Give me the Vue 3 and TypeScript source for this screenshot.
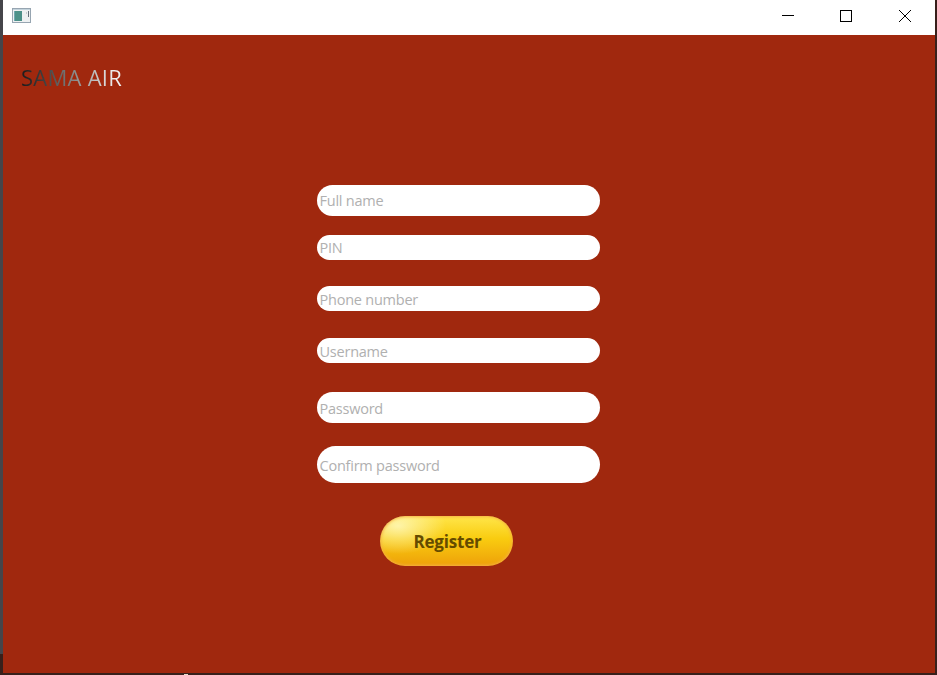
<script setup lang="ts">
import { reactive } from 'vue'

interface Field {
  key: string
  placeholder: string
  type: string
  size: string
}

const fields: Field[] = [
  { key: 'fullName', placeholder: 'Full name', type: 'text', size: 'medium' },
  { key: 'pin', placeholder: 'PIN', type: 'text', size: 'small' },
  { key: 'phone', placeholder: 'Phone number', type: 'text', size: 'small phone' },
  { key: 'username', placeholder: 'Username', type: 'text', size: 'small username' },
  { key: 'password', placeholder: 'Password', type: 'password', size: 'medium password' },
  { key: 'confirm', placeholder: 'Confirm password', type: 'password', size: 'large' },
]

const values = reactive<Record<string, string>>({})
</script>

<template>
  <div class="desktop">
    <div class="window">
      <header class="titlebar">
        <svg class="app-icon" width="20" height="16" viewBox="0 0 20 16">
          <rect x="0.5" y="0.5" width="18" height="14" fill="#eef1f2" stroke="#97a5b1" />
          <path d="M1 1.5H18" stroke="#c3d3dc" />
          <rect x="2" y="3" width="8" height="10" fill="#4c9189" />
          <path d="M2.5 3V13" stroke="#70a8b0" />
          <path d="M16.5 3V9" stroke="#65717b" />
          <path d="M14.5 4V6" stroke="#c5cbd0" />
        </svg>
        <div class="controls">
          <svg width="12" height="12" viewBox="0 0 12 12"><path d="M0 5.5H12" /></svg>
          <svg width="12" height="12" viewBox="0 0 12 12"><rect x="0.5" y="0.5" width="11" height="11" /></svg>
          <svg width="12" height="12" viewBox="0 0 12 12"><path d="M0 0L12 12M12 0L0 12" /></svg>
        </div>
      </header>
      <main class="content">
        <h1 class="brand">SAMA AIR</h1>
        <form class="form" @submit.prevent>
          <input
            v-for="field in fields"
            :key="field.key"
            v-model="values[field.key]"
            :type="field.type"
            :placeholder="field.placeholder"
            :class="['field', field.size]"
          />
          <button class="register" type="submit"><span>Register</span></button>
        </form>
      </main>
    </div>
  </div>
</template>

<style>
body {
  margin: 0;
  overflow: hidden;
}
</style>

<style scoped>
.desktop {
  box-sizing: border-box;
  width: 937px;
  height: 675px;
  padding: 0 2px 2px 3px;
  background:
    linear-gradient(#e8dccb, #e8dccb) 184px 674px / 4px 1px no-repeat,
    linear-gradient(#45454a, #45454a) 0 0 / 3px 654px no-repeat,
    #38201b;
  font-family: "Open Sans", "Noto Sans", sans-serif;
}

.window {
  display: flex;
  flex-direction: column;
  height: 673px;
  background: #a0280e;
}

.titlebar {
  display: flex;
  justify-content: space-between;
  height: 35px;
  background: #fff;
}

.app-icon {
  margin: 8px 0 0 9px;
}

.controls {
  display: flex;
  gap: 46px;
  padding: 10px 24px 0 0;
}

.controls svg {
  fill: none;
  stroke: #000;
  stroke-width: 1;
}

.controls svg:nth-child(3) {
  margin-left: 1px;
}

.content {
  display: flex;
  flex-direction: column;
}

.brand {
  width: 103px;
  height: 32px;
  margin: 26px 0 0 18px;
  font-size: 22px;
  font-weight: 400;
  line-height: 32px;
  letter-spacing: 0.25px;
  white-space: nowrap;
  color: transparent;
  background: linear-gradient(90deg, #1a1a1a 0%, #444 25%, #eee 90%);
  background-clip: text;
}

.form {
  display: flex;
  flex-direction: column;
  width: 283px;
  margin: 92px 0 0 313.5px;
}

.field {
  box-sizing: border-box;
  width: 283px;
  padding: 0 3px 1px;
  border: 0;
  border-radius: 20px;
  outline: none;
  background: #fff;
  color: #333;
  font: 400 14.5px "Open Sans", "Noto Sans", sans-serif;
  letter-spacing: -0.23px;
}

.field::placeholder {
  color: #b0b0b0;
  opacity: 1;
}

.medium {
  height: 31px;
}

.small {
  height: 25px;
  margin-top: 19px;
}

.phone {
  margin-top: 26px;
  padding: 2px 3px 0;
}

.username {
  margin-top: 27.4px;
  padding: 2px 3px 0;
}

.password {
  margin-top: 28.6px;
  padding: 2px 3px 0;
}

.large {
  height: 37px;
  margin-top: 23px;
  padding: 3px 3px 0;
}

.register {
  width: 133px;
  height: 50px;
  margin: 33px 0 0 63.5px;
  padding: 2px 0 0;
  border: 0;
  border-radius: 25px;
  background:
    radial-gradient(ellipse 48px 28px at 18px 10px, rgba(255, 255, 220, 0.7), transparent),
    linear-gradient(#ffe64a 0%, #f9cc10 45%, #eea009 100%);
  box-shadow: inset 0 0 3px 1px #f5b043;
  color: #654b00;
  font: 700 17px "Open Sans", "Noto Sans", sans-serif;
  letter-spacing: -0.2px;
}

.register span {
  padding-left: 2px;
}
</style>
